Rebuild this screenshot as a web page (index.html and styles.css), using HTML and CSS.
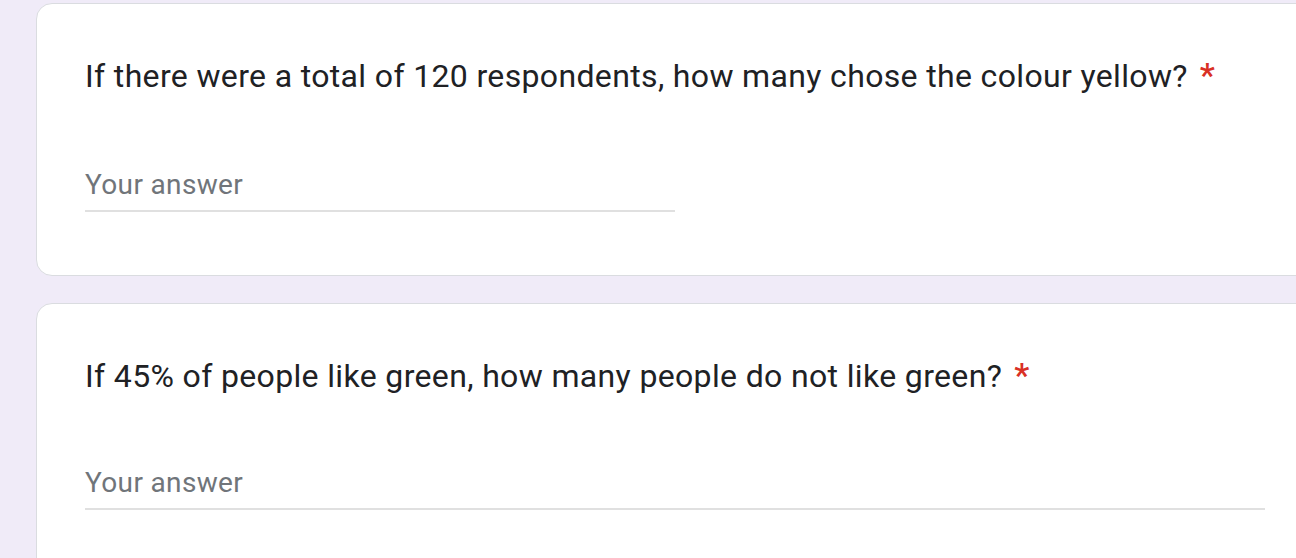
FILE: index.html
```html
<!DOCTYPE html>
<html lang="en">
<head>
<meta charset="utf-8">
<title>Form</title>
<link rel="stylesheet" href="styles.css">
</head>
<body>
<main class="page">
  <section class="card">
    <div class="question">If there were a total of 120 respondents, how many chose the colour yellow?<span class="req">*</span></div>
    <div class="field field-half"><span class="placeholder">Your answer</span></div>
  </section>
  <section class="card card-second">
    <div class="question">If 45% of people like green, how many people do not like green?<span class="req">*</span></div>
    <div class="field"><span class="placeholder">Your answer</span></div>
  </section>
</main>
</body>
</html>
```
FILE: styles.css
```css
html, body {
  margin: 0;
  padding: 0;
  background: #f0ebf8;
  overflow: hidden;
}
.page {
  padding: 3px 0 0 36px;
  width: 1278px;
}
.card {
  box-sizing: border-box;
  width: 1278px;
  background: #fff;
  border: 1px solid #dadce0;
  border-radius: 16px;
  padding: 48px 48px 63px;
  margin-bottom: 27px;
}
.question {
  font-family: Roboto, "Noto Sans", sans-serif;
  font-size: 32px;
  line-height: 48px;
  color: #202124;
  letter-spacing: 0.35px;
}
.req {
  color: #d93025;
  font-size: 34px;
  font-weight: 500;
  line-height: 1px;
  margin-left: 12px;
}
.field {
  margin-top: 65px;
  padding-bottom: 5px;
  border-bottom: 2px solid #e0e0e0;
  font-family: Roboto, "Noto Sans", sans-serif;
  font-size: 28px;
  line-height: 40px;
  color: #70757a;
  letter-spacing: 0.35px;
}
.card-second .field {
  margin-top: 63px;
}
.field-half {
  width: 50%;
}
```
